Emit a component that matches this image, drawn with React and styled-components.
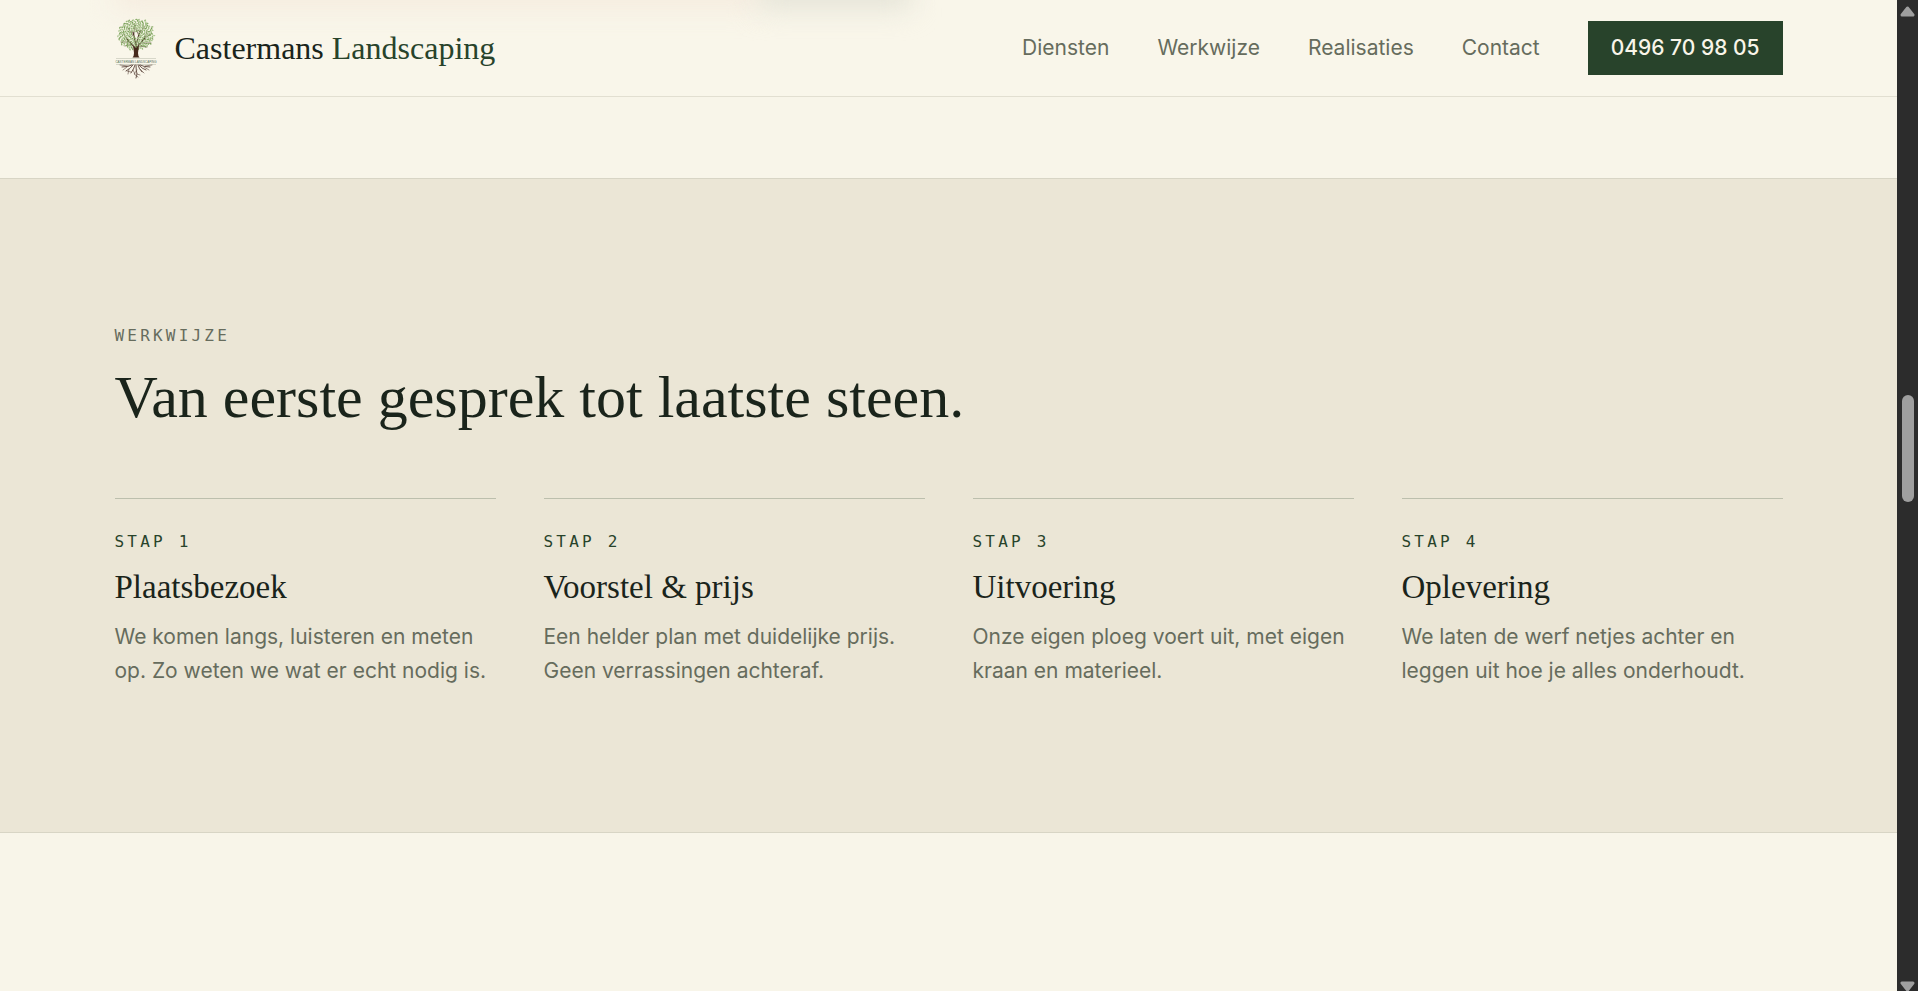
import styled, { createGlobalStyle } from "styled-components";

const serif = `"Liberation Serif", "Times New Roman", serif`;
const sans = `Inter, "Liberation Sans", sans-serif`;
const mono = `"DejaVu Sans Mono", "Liberation Mono", monospace`;

const GlobalStyle = createGlobalStyle`
  *, *::before, *::after {
    box-sizing: border-box;
  }

  body {
    margin: 0;
    background: #f8f5e9;
    color: #1a241b;
    font-family: ${sans};
  }

  h2, h3, p, ol {
    margin: 0;
    padding: 0;
  }
`;

const Layout = styled.div`
  display: grid;
  grid-template-columns: 1fr 21px;
  height: 100vh;
  overflow: hidden;
`;

const Page = styled.div`
  min-width: 0;
  overflow: hidden;
`;

const Container = styled.div`
  width: 88%;
  max-width: 1668px;
  margin: 0 auto;
`;

const Header = styled.header`
  position: relative;
  overflow: hidden;
  background: #f9f6ea;
  border-bottom: 1px solid #e2dfd1;
`;

const Glow = styled.div`
  position: absolute;
  top: -24px;
  left: ${(p) => p.$left};
  width: ${(p) => p.$width};
  height: 32px;
  background: ${(p) => p.$color};
  filter: blur(14px);
`;

const HeaderRow = styled(Container)`
  position: relative;
  display: flex;
  align-items: center;
  justify-content: space-between;
  height: 96px;
`;

const Brand = styled.a`
  display: flex;
  align-items: center;
  gap: 18px;
  color: #1a241b;
  font-family: ${serif};
  font-size: 32px;
  text-decoration: none;

  em {
    color: #28432b;
    font-style: normal;
  }
`;

const Nav = styled.nav`
  display: flex;
  align-items: center;
  gap: 48px;
`;

const NavLink = styled.a`
  color: #666c5d;
  font-size: 21px;
  line-height: 54px;
  text-decoration: none;
`;

const PhoneLink = styled(NavLink)`
  padding: 0 23px;
  background: #28432b;
  color: #f8f5e9;
  font-weight: 500;
`;

const Section = styled.section`
  margin-top: 81px;
  padding: 144px 0;
  background: #ebe6d6;
  border-top: 1px solid #d8d5c5;
  border-bottom: 1px solid #d8d5c5;
`;

const Eyebrow = styled.p`
  color: #666c5d;
  font-family: ${mono};
  font-size: 16px;
  letter-spacing: 0.2em;
  line-height: 26px;
  text-transform: uppercase;
`;

const Title = styled.h2`
  margin-top: 16px;
  font-family: ${serif};
  font-size: 60px;
  font-weight: 400;
  line-height: 64px;
`;

const Steps = styled.ol`
  display: grid;
  grid-template-columns: repeat(4, 1fr);
  gap: 48px;
  margin-top: 69px;
  list-style: none;
`;

const Step = styled.li`
  padding-top: 30px;
  border-top: 1px solid #bcbfad;
`;

const StepLabel = styled(Eyebrow)`
  color: #28432b;
`;

const StepTitle = styled.h3`
  margin-top: 12px;
  font-family: ${serif};
  font-size: 33px;
  font-weight: 400;
  line-height: 40px;
`;

const StepText = styled.p`
  margin-top: 13px;
  color: #666c5d;
  font-size: 21px;
  line-height: 34px;
`;

const ScrollTrack = styled.div`
  display: flex;
  flex-direction: column;
  align-items: center;
  background: #2c2c2c;
`;

const ScrollThumb = styled.div`
  width: 12px;
  height: 107px;
  margin-top: 378px;
  border-radius: 6px;
  background: #9f9f9f;
`;

const ArrowUp = styled.svg`
  display: block;
  flex: none;
  margin-top: 6px;
`;

const ArrowDown = styled(ArrowUp)`
  margin-top: auto;
`;

const navItems = ["Diensten", "Werkwijze", "Realisaties", "Contact"];

const steps = [
  {
    title: "Plaatsbezoek",
    text: "We komen langs, luisteren en meten op. Zo weten we wat er echt nodig is.",
  },
  {
    title: "Voorstel & prijs",
    text: "Een helder plan met duidelijke prijs. Geen verrassingen achteraf.",
  },
  {
    title: "Uitvoering",
    text: "Onze eigen ploeg voert uit, met eigen kraan en materieel.",
  },
  {
    title: "Oplevering",
    text: "We laten de werf netjes achter en leggen uit hoe je alles onderhoudt.",
  },
];

const greens = ["#8bad6a", "#9abb7c", "#7aa05a", "#adc792"];

// leaves spread over the crown along a sunflower spiral
const leaves = Array.from({ length: 210 }, (_, i) => {
  const angle = i * 2.39996;
  const r = Math.sqrt((i + 8) / 218) * (1 + 0.05 * Math.sin(i * 5));
  return {
    x: 21 + Math.cos(angle) * r * 18,
    y: 17.5 + Math.sin(angle) * r * 15.5,
    turn: (i * 67) % 180,
    color: greens[i % 4],
  };
});

const TreeLogo = () => (
  <svg width="42" height="62" viewBox="0 0 42 62" aria-hidden="true">
    <g fill="none" stroke="#51382c" strokeLinecap="round">
      <path d="M21 38V26M21 32L12 22M21 31L30 21M21 28L18 15M21 28L25 14" strokeWidth="1.3" />
      <path
        d="M15 25L6 25M12 22L8 16M17 27L10 29M18 19L13 11M19 17L20 7M25 16L30 9M24 19L21 12M28 23L35 17M26 26L36 26M30 21L32 14M23 29L32 30"
        strokeWidth="0.6"
      />
    </g>
    {leaves.map((leaf, i) => (
      <ellipse
        key={i}
        cx={leaf.x}
        cy={leaf.y}
        rx="1.2"
        ry="0.7"
        fill={leaf.color}
        transform={`rotate(${leaf.turn} ${leaf.x} ${leaf.y})`}
      />
    ))}
    <path d="M17.5 40.5Q19 39 19 36L18 28L21 31L24 28L23 36Q23 39 24.5 40.5Z" fill="#46291c" />
    <path d="M1 41.5H41M1 47.5H41" stroke="#b5b8a9" strokeWidth="0.5" />
    <text
      x="21"
      y="45.6"
      textAnchor="middle"
      fontFamily="Liberation Sans, sans-serif"
      fontSize="3"
      fill="#55715a"
    >
      CASTERMAN LANDSCAPING
    </text>
    <g fill="none" stroke="#5b443b" strokeLinecap="round">
      <path
        d="M17 48Q13 50 7 50M18 48Q15 52 11 54M20 48Q19 52 16 56M21 48Q21 54 22 57L21 61M23 48Q24 52 27 55M24 48Q27 52 31 53M25 48Q29 50 35 50"
        strokeWidth="0.9"
      />
      <path
        d="M12 50L8 53M14 52L13 57M18 53L20 57M22 53L19 57L23 60M22 57L25 58M25 52L29 56M29 50L34 53M13 49L5 48M30 49L37 48M16 55L12 54"
        strokeWidth="0.6"
      />
    </g>
  </svg>
);

const Scrollbar = () => (
  <ScrollTrack aria-hidden="true">
    <ArrowUp width="15" height="11" viewBox="0 0 15 11">
      <path d="M7.5 2L13 9H2Z" fill="#9f9f9f" stroke="#9f9f9f" strokeWidth="3" strokeLinejoin="round" />
    </ArrowUp>
    <ScrollThumb />
    <ArrowDown width="15" height="10" viewBox="0 0 15 10">
      <path d="M7.5 9L2 2H13Z" fill="#9f9f9f" stroke="#9f9f9f" strokeWidth="3" strokeLinejoin="round" />
    </ArrowDown>
  </ScrollTrack>
);

const App = () => {
  return (
    <Layout>
      <GlobalStyle />
      <Page>
        <Header>
          <Glow $left="6%" $width="34%" $color="#f5ebde" />
          <Glow $left="40%" $width="8%" $color="#e3e2d6" />
          <HeaderRow>
            <Brand href="#top">
              <TreeLogo />
              <span>
                Castermans <em>Landscaping</em>
              </span>
            </Brand>
            <Nav>
              {navItems.map((item) => (
                <NavLink key={item} href={`#${item.toLowerCase()}`}>
                  {item}
                </NavLink>
              ))}
              <PhoneLink href="tel:0496709805">0496 70 98 05</PhoneLink>
            </Nav>
          </HeaderRow>
        </Header>
        <Section id="werkwijze">
          <Container>
            <Eyebrow>Werkwijze</Eyebrow>
            <Title>Van eerste gesprek tot laatste steen.</Title>
            <Steps>
              {steps.map((step, i) => (
                <Step key={step.title}>
                  <StepLabel>Stap {i + 1}</StepLabel>
                  <StepTitle>{step.title}</StepTitle>
                  <StepText>{step.text}</StepText>
                </Step>
              ))}
            </Steps>
          </Container>
        </Section>
      </Page>
      <Scrollbar />
    </Layout>
  );
};

export default App;
